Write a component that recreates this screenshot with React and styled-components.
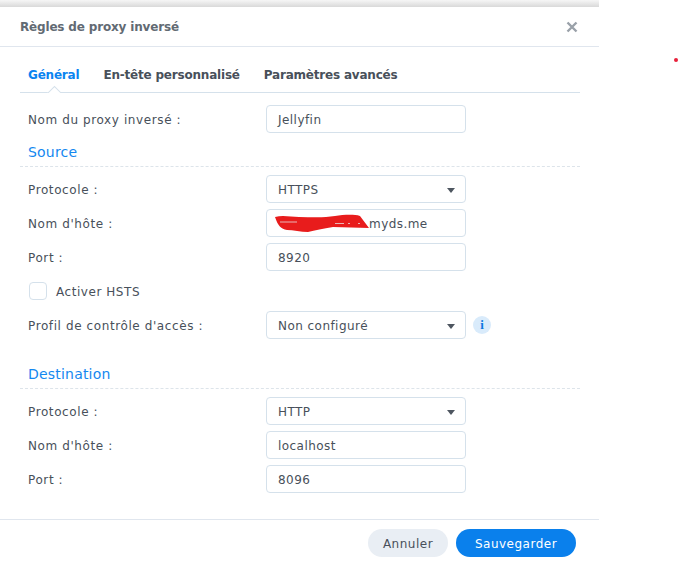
import React from "react";
import styled, { createGlobalStyle } from "styled-components";

const GlobalStyle = createGlobalStyle`
  html, body {
    margin: 0;
    padding: 0;
    background: #fff;
    font-family: "DejaVu Sans", sans-serif;
  }
  * { box-sizing: border-box; }
`;

const Page = styled.div`
  position: relative;
  width: 678px;
  height: 564px;
  overflow: hidden;
  background: #fff;
`;

const RedDot = styled.span`
  position: absolute;
  left: 674px;
  top: 58px;
  width: 4px;
  height: 4px;
  border-radius: 50%;
  background: #e8203a;
`;

const TopShade = styled.div`
  width: 599px;
  height: 7px;
  background: linear-gradient(#f6f6f6, #d9d9d9);
`;

const Dialog = styled.div`
  width: 599px;
  background: #fff;
  border-radius: 3px 3px 0 0;
`;

const Header = styled.header`
  display: flex;
  align-items: center;
  justify-content: space-between;
  height: 40px;
  padding: 0 21px 0 20px;
  border-bottom: 1px solid #e0e6ee;
`;

const Title = styled.h1`
  margin: 0;
  font-size: 12px;
  font-weight: 700;
  letter-spacing: -0.17px;
  color: #626a73;
`;

const CloseIcon = styled.svg`
  display: block;
  width: 12px;
  height: 12px;
`;

const Tabs = styled.nav`
  position: relative;
  display: flex;
  gap: 24px;
  height: 46px;
  margin: 0 19px 0 20px;
  padding: 10px 8px 0;
  border-bottom: 1px solid #d5e1eb;
  align-items: center;
`;

const Tab = styled.span`
  font-size: 12px;
  font-weight: 700;
  letter-spacing: -0.2px;
  color: ${(p) => (p.$active ? "#0a84f0" : "#48505a")};
`;

const TabNotch = styled.span`
  position: absolute;
  left: 27px;
  bottom: -1px;
  width: 14px;
  height: 8px;
  overflow: hidden;
  &::after {
    content: "";
    position: absolute;
    left: 2px;
    top: 3px;
    width: 9px;
    height: 9px;
    background: #fff;
    border: 1px solid #d5e1eb;
    transform: rotate(45deg);
  }
`;

const Body = styled.div`
  display: flex;
  flex-direction: column;
  margin: 0 19px 0 20px;
  padding-top: 12px;
  height: 426px;
`;

const Row = styled.div`
  display: flex;
  align-items: center;
  height: 28px;
  margin-bottom: 6px;
  padding-left: 8px;
`;

const Label = styled.label`
  width: 238px;
  padding-top: 2px;
  font-size: 12px;
  color: #48505a;
  letter-spacing: 0.6px;
`;

const Field = styled.div`
  position: relative;
  display: flex;
  align-items: center;
  justify-content: space-between;
  width: 200px;
  height: 28px;
  padding: 2px 11px 0;
  border: 1px solid #d5e1eb;
  border-radius: 4px;
  font-size: 12px;
  color: #48505a;
  letter-spacing: 0.45px;
  background: #fff;
`;

const Caret = styled.span`
  width: 0;
  height: 0;
  margin-right: -1px;
  border-left: 4.5px solid transparent;
  border-right: 4.5px solid transparent;
  border-top: 5px solid #4e5660;
`;

const HostValue = styled.span`
  padding-left: 91px;
`;

const Scribble = styled.svg`
  position: absolute;
  left: 8px;
  top: 4px;
  width: 96px;
  height: 20px;
`;

const SectionTitle = styled.div`
  display: flex;
  align-items: flex-end;
  height: ${(p) => p.$height}px;
  padding: 0 0 6px 8px;
  border-bottom: 1px dashed #dde4ea;
  margin-bottom: 8px;
  font-size: 14px;
  color: #1488f0;
  letter-spacing: 0.2px;
`;

const CheckRow = styled.div`
  display: flex;
  align-items: center;
  gap: 9px;
  height: 18px;
  margin: 5px 0 11px;
  padding-left: 9px;
  font-size: 12px;
  color: #48505a;
  letter-spacing: 0.55px;
`;

const CheckLabel = styled.span`
  padding-top: 2px;
`;

const CheckBox = styled.span`
  width: 18px;
  height: 18px;
  border: 1px solid #d5e1eb;
  border-radius: 4px;
`;

const InfoBadge = styled.span`
  display: flex;
  align-items: center;
  justify-content: center;
  width: 18px;
  height: 18px;
  margin-left: 7px;
  border-radius: 50%;
  background: #d9ebfb;
  color: #0a78e0;
  font-family: "Liberation Serif", serif;
  font-size: 13px;
  font-weight: 700;
`;

const Footer = styled.footer`
  display: flex;
  justify-content: flex-end;
  gap: 8px;
  height: 45px;
  padding: 9px 23px 0 0;
  border-top: 1px solid #e0e6ee;
`;

const Button = styled.button`
  width: ${(p) => p.$width}px;
  height: 28px;
  padding: 2px 0 0;
  border: none;
  border-radius: 14px;
  font-family: inherit;
  font-size: 12px;
  letter-spacing: 0.5px;
  color: ${(p) => (p.$primary ? "#fff" : "#48505a")};
  background: ${(p) => (p.$primary ? "#0a80ec" : "#e9eef4")};
`;

function FormRow({ label, children, after }) {
  return (
    <Row>
      <Label>{label}</Label>
      <Field>{children}</Field>
      {after}
    </Row>
  );
}

function SelectRow({ label, value, after }) {
  return (
    <FormRow label={label} after={after}>
      <span>{value}</span>
      <Caret />
    </FormRow>
  );
}

export default function App() {
  return (
    <Page>
      <GlobalStyle />
      <TopShade />
      <Dialog>
        <Header>
          <Title>Règles de proxy inversé</Title>
          <CloseIcon viewBox="0 0 12 12">
            <path d="M1.5 1.5l9 9M10.5 1.5l-9 9" stroke="#9aa1a9" strokeWidth="2.4" />
          </CloseIcon>
        </Header>
        <Tabs>
          <Tab $active>Général</Tab>
          <Tab>En-tête personnalisé</Tab>
          <Tab>Paramètres avancés</Tab>
          <TabNotch />
        </Tabs>
        <Body>
          <FormRow label="Nom du proxy inversé :">Jellyfin</FormRow>
          <SectionTitle $height={28}>Source</SectionTitle>
          <SelectRow label="Protocole :" value="HTTPS" />
          <FormRow label="Nom d'hôte :">
            <HostValue>myds.me</HostValue>
            <Scribble viewBox="0 0 96 20">
              <path
                d="M0 3C8 1 16 3 24 3C36 3 48 4 60 2C68 1 78 0 85 2L94 14C82 14 70 13 58 13C48 15 40 16 33 18C26 18 18 16 12 16C6 15 3 12 0 3Z"
                fill="#e81c1c"
              />
              <path
                d="M5 8H22M60 9.5H69M73 9.5H75M83 9.5H85"
                stroke="#e9b4b4"
                strokeWidth="1"
                fill="none"
              />
            </Scribble>
          </FormRow>
          <FormRow label="Port :">8920</FormRow>
          <CheckRow>
            <CheckBox />
            <CheckLabel>Activer HSTS</CheckLabel>
          </CheckRow>
          <SelectRow
            label="Profil de contrôle d'accès :"
            value="Non configuré"
            after={<InfoBadge>i</InfoBadge>}
          />
          <SectionTitle $height={44}>Destination</SectionTitle>
          <SelectRow label="Protocole :" value="HTTP" />
          <FormRow label="Nom d'hôte :">localhost</FormRow>
          <FormRow label="Port :">8096</FormRow>
        </Body>
        <Footer>
          <Button $width={80}>Annuler</Button>
          <Button $width={120} $primary>
            Sauvegarder
          </Button>
        </Footer>
      </Dialog>
      <RedDot />
    </Page>
  );
}
